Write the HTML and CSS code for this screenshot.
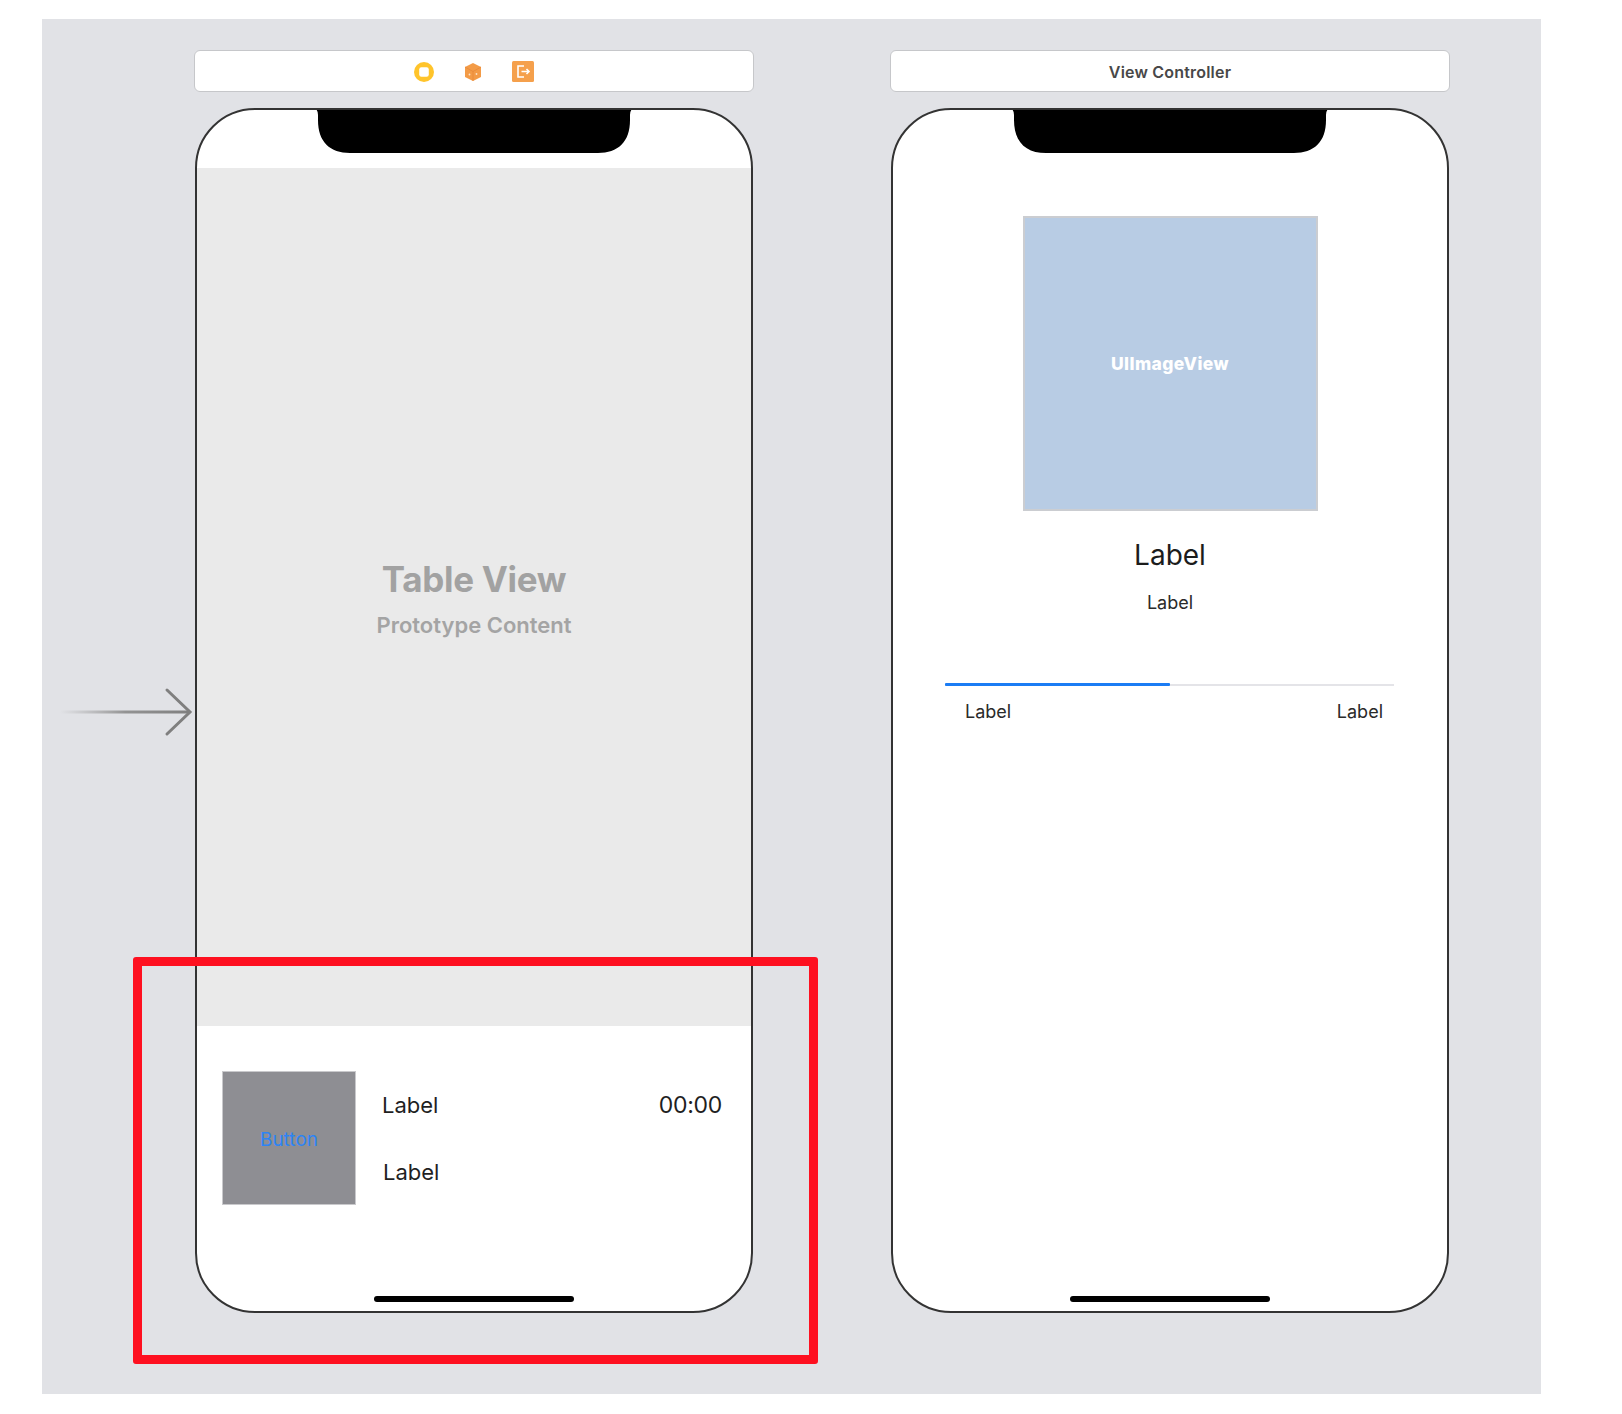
FILE: index.html
```html
<!DOCTYPE html>
<html>
<head>
<meta charset="utf-8">
<link rel="stylesheet" href="styles.css">
</head>
<body>
<div class="canvas">
  <svg class="entry-arrow" width="135" height="50" viewBox="0 0 135 50">
    <defs>
      <linearGradient id="fade" gradientUnits="userSpaceOnUse" x1="0" y1="25" x2="131" y2="25">
        <stop offset="0" stop-color="#9a9a9a" stop-opacity="0"/>
        <stop offset="0.5" stop-color="#8a8a8a" stop-opacity="0.9"/>
        <stop offset="1" stop-color="#7f7f7f"/>
      </linearGradient>
    </defs>
    <rect x="0" y="23.5" width="130" height="3" fill="url(#fade)"/>
    <polyline points="107,3 130,25 107,47" fill="none" stroke="#7f7f7f" stroke-width="3" stroke-linecap="round" stroke-linejoin="miter"/>
  </svg>

  <div class="scene">
    <div class="scene-bar">
      <svg class="bar-icon" width="20" height="20" viewBox="0 0 20 20">
        <circle cx="10" cy="10" r="10" fill="#ffc42b"/>
        <rect x="5.2" y="5.2" width="9.6" height="9.6" rx="2.2" fill="#fff"/>
      </svg>
      <svg class="bar-icon" width="20" height="20" viewBox="0 0 20 20">
        <polygon points="10,1 18,5 18,15 10,19 2,15 2,5" fill="#f39b47"/>
        <polyline points="2,5 10,9.5 18,5" fill="none" stroke="#e9893a" stroke-width="0.8"/>
        <line x1="10" y1="9.5" x2="10" y2="19" stroke="#e9893a" stroke-width="0.8"/>
        <circle cx="6.5" cy="12.5" r="0.9" fill="#fde3c8"/>
        <circle cx="13.5" cy="12" r="0.9" fill="#fde3c8"/>
      </svg>
      <svg class="bar-icon" width="22" height="21" viewBox="0 0 22 21">
        <rect x="0" y="0" width="22" height="21" rx="1.5" fill="#f5a04c"/>
        <path d="M12 5 H6 V16 H12" fill="none" stroke="#fff" stroke-width="1.6"/>
        <path d="M9.5 10.5 H17 M14.5 8 L17 10.5 L14.5 13" fill="none" stroke="#fff" stroke-width="1.6"/>
      </svg>
    </div>
    <div class="phone">
      <div class="status">
        <svg class="notch" width="324" height="46" viewBox="0 0 324 46">
          <path d="M0 0 H324 Q318 0 318 7 V12 C318 34 306 45 286 45 H38 C18 45 6 34 6 12 V7 Q6 0 0 0 Z" fill="#000"/>
        </svg>
      </div>
      <div class="table-view">
        <div class="tv-title">Table View</div>
        <div class="tv-sub">Prototype Content</div>
      </div>
      <div class="cell-area">
        <div class="cell">
          <div class="cell-button">Button</div>
          <div class="cell-labels">
            <div class="cell-label">Label</div>
            <div class="cell-label">Label</div>
          </div>
          <div class="cell-time">00:00</div>
        </div>
        <div class="home-indicator"></div>
      </div>
    </div>
  </div>

  <div class="scene">
    <div class="scene-bar">
      <span class="bar-title">View Controller</span>
    </div>
    <div class="phone">
      <div class="status">
        <svg class="notch" width="324" height="46" viewBox="0 0 324 46">
          <path d="M0 0 H324 Q318 0 318 7 V12 C318 34 306 45 286 45 H38 C18 45 6 34 6 12 V7 Q6 0 0 0 Z" fill="#000"/>
        </svg>
      </div>
      <div class="detail">
        <div class="image-view">UIImageView</div>
        <div class="big-label">Label</div>
        <div class="small-label">Label</div>
        <div class="progress">
          <div class="progress-fill" style="width: 50%"></div>
        </div>
        <div class="progress-labels">
          <span class="pl-left">Label</span>
          <span class="pl-right">Label</span>
        </div>
      </div>
      <div class="home-indicator"></div>
    </div>
  </div>

  <div class="highlight"></div>
</div>
</body>
</html>
```

FILE: styles.css
```css
* { box-sizing: border-box; }

html, body {
  margin: 0;
  padding: 0;
  background: #ffffff;
}

body {
  font-family: Inter, "Liberation Sans", sans-serif;
  width: 1622px;
  height: 1414px;
  overflow: hidden;
}

.canvas {
  position: relative;
  margin: 19px 0 0 42px;
  width: 1499px;
  height: 1375px;
  background: #e1e2e6;
  padding: 31px 0 0 152px;
  display: flex;
  gap: 136px;
  align-items: flex-start;
}

.entry-arrow {
  position: absolute;
  left: 18px;
  top: 668px;
}

.scene {
  width: 560px;
  display: flex;
  flex-direction: column;
  align-items: center;
  gap: 16px;
}

.scene-bar {
  width: 560px;
  height: 42px;
  background: #ffffff;
  border: 1px solid #c6c7ca;
  border-radius: 6px;
  display: flex;
  align-items: center;
  justify-content: center;
  gap: 29px;
  padding-top: 1px;
}

.bar-icon { display: block; }

.bar-title {
  font-size: 16px;
  font-weight: 600;
  color: #484848;
  letter-spacing: 0.2px;
}

.phone {
  width: 558px;
  height: 1205px;
  border: 2px solid #333333;
  border-radius: 60px;
  background: #ffffff;
  overflow: hidden;
  display: flex;
  flex-direction: column;
}

.status {
  height: 58px;
  flex: none;
  display: flex;
  justify-content: center;
  align-items: flex-start;
}

.notch { display: block; margin-top: -2px; }

.table-view {
  height: 858px;
  flex: none;
  background: #eaeaea;
  display: flex;
  flex-direction: column;
  align-items: center;
  justify-content: center;
  padding-top: 2px;
}

.tv-title {
  font-size: 35px;
  font-weight: 700;
  color: #a2a2a2;
  line-height: 42px;
  letter-spacing: -0.3px;
}

.tv-sub {
  font-size: 22px;
  font-weight: 600;
  color: #a4a4a4;
  line-height: 26px;
  margin-top: 12px;
}

.cell-area {
  flex: 1;
  display: flex;
  flex-direction: column;
  align-items: center;
}

.cell {
  width: 100%;
  display: flex;
  align-items: flex-start;
  padding: 45px 29px 0 25px;
}

.cell-button {
  width: 134px;
  height: 134px;
  flex: none;
  background: #8e8e93;
  border: 1px solid #c9c9cc;
  display: flex;
  align-items: center;
  justify-content: center;
  color: #2d84f5;
  font-size: 19px;
  padding-top: 3px;
}

.cell-labels {
  flex: 1;
  display: flex;
  flex-direction: column;
  gap: 39px;
  padding: 20px 0 0 26px;
}

.cell-label,
.cell-time {
  font-size: 22px;
  line-height: 28px;
  color: #1f1f1f;
}

.cell-label + .cell-label { margin-left: 1px; }

.cell-time {
  margin-top: 20px;
  font-size: 23px;
  letter-spacing: -0.3px;
}

.home-indicator {
  width: 200px;
  height: 6px;
  border-radius: 3px;
  background: #000000;
  margin: auto auto 9px;
  flex: none;
}

.detail {
  display: flex;
  flex-direction: column;
  align-items: center;
}

.image-view {
  margin-top: 48px;
  width: 295px;
  height: 295px;
  background: #b8cce4;
  border: 2px solid #cbcdd1;
  display: flex;
  align-items: center;
  justify-content: center;
  color: #ffffff;
  font-size: 17.5px;
  font-weight: 800;
  letter-spacing: 0.4px;
}

.big-label {
  margin-top: 26px;
  font-size: 28px;
  line-height: 36px;
  color: #1c1c1c;
}

.small-label {
  margin-top: 19px;
  font-size: 18px;
  line-height: 22px;
  color: #2a2a2a;
}

.progress {
  align-self: stretch;
  margin: 69px 53px 0 52px;
  height: 3px;
  background: linear-gradient(#ffffff 0 0.5px, #e4e4e8 0.5px 2.5px, #ffffff 2.5px);
  position: relative;
}

.progress-fill {
  height: 3px;
  background: #1b7cf4;
  border-radius: 1px;
}

.progress-labels {
  align-self: stretch;
  display: flex;
  justify-content: space-between;
  margin: 15px 64px 0 72px;
  font-size: 18px;
  line-height: 22px;
  color: #2a2a2a;
}

.highlight {
  position: absolute;
  left: 91px;
  top: 938px;
  width: 685px;
  height: 407px;
  border: 9.5px solid #fe1020;
  border-radius: 3px;
  pointer-events: none;
}
```
